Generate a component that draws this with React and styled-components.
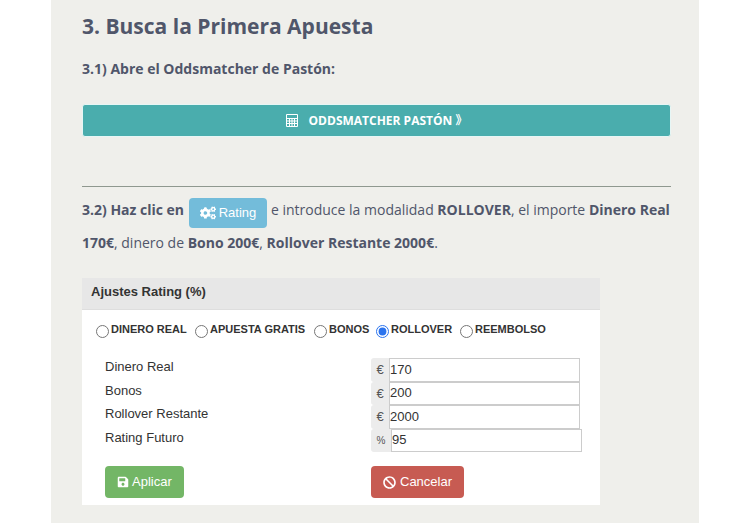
import React, { useState } from 'react';
import styled, { createGlobalStyle } from 'styled-components';
import { FaBan, FaCogs, FaSave } from 'react-icons/fa';

const GlobalStyle = createGlobalStyle`
  body {
    margin: 0;
    background: #fff;
  }

  * {
    box-sizing: border-box;
  }
`;

const Article = styled.main`
  margin: 0 51px;
  padding: 8px 28px 18px 31px;
  background: #efefeb;
  color: #50566a;
  font-family: 'Open Sans', 'Noto Sans CJK JP', sans-serif;
  font-size: 14px;
  line-height: 30px;
`;

const Title = styled.h2`
  margin: 0 0 10px;
  font-size: 21px;
  font-weight: 700;
  line-height: 36px;
`;

const Step = styled.p`
  margin: 0;
`;

const OddsmatcherLink = styled.a`
  display: flex;
  align-items: center;
  justify-content: center;
  gap: 11px;
  height: 33px;
  margin: 20px 0 49px;
  border: 1px solid #e6f6f5;
  border-radius: 3px;
  background: #4aadad;
  color: #fff;
  font-size: 12px;
  font-weight: 700;
  text-decoration: none;
`;

const Divider = styled.hr`
  margin: 0 0 8px;
  border: 0;
  border-top: 1px solid #8f988f;
`;

const Button = styled.button`
  display: inline-flex;
  align-items: center;
  justify-content: center;
  justify-self: start;
  gap: ${(props) => props.$gap || 3}px;
  height: 32px;
  padding: 0 12px;
  border: 0;
  border-radius: 4px;
  background: ${(props) => props.$color};
  color: #fff;
  font-family: 'Liberation Sans', Arial, sans-serif;
  font-size: 13px;
  line-height: 16px;
`;

const RatingButton = styled(Button)`
  height: 30px;
  margin-left: 1px;
  padding: 0 11px;
  vertical-align: -6px;
`;

const Panel = styled.form`
  max-width: 518px;
  margin-top: 20px;
  padding-bottom: 7px;
  background: #fff;
  color: #333;
  font-family: 'Liberation Sans', Arial, sans-serif;
  font-size: 13px;
  line-height: 18px;
`;

const PanelHeader = styled.h3`
  height: 32px;
  margin: 0;
  padding: 5px 9px;
  border-bottom: 1px solid #dedede;
  background: #e7e7e7;
  font-size: 13px;
  line-height: 18px;
`;

const Modes = styled.div`
  display: grid;
  grid-template-columns: 99px 119px 62px 84px auto;
  padding: 10px 14px 0;
`;

const Mode = styled.label`
  display: flex;
  align-items: flex-start;
  gap: 2px;
  font-size: 11px;
  font-weight: 700;
  white-space: nowrap;

  input {
    width: 13px;
    height: 13px;
    margin: 5px 0 0;
    accent-color: #2a73ee;
  }
`;

const Fields = styled.div`
  display: grid;
  grid-auto-rows: 1fr;
  height: 94px;
  margin: 20px 0 14px;
`;

const Field = styled.div`
  display: grid;
  grid-template-columns: 266px 1fr;
  padding: 0 18px 0 23px;
`;

const Amount = styled.div`
  display: flex;
`;

const Unit = styled.span`
  width: ${(props) => (props.$small ? 20 : 18)}px;
  border-radius: 3px 0 0 3px;
  background: #ececec;
  color: #555;
  font-size: ${(props) => (props.$small ? 10 : 13)}px;
  line-height: 23px;
  text-align: center;
`;

const AmountInput = styled.input`
  width: 191px;
  min-width: 0;
  padding: 0;
  border: 1px solid #ccc;
  border-radius: 0;
  background: #fff;
  color: #333;
  font: inherit;
`;

const CalculatorIcon = () => (
  <svg width="12" height="13" viewBox="0 0 12 13" fill="none" stroke="#fff" aria-hidden="true">
    <path d="M.5.5h11v12H.5zM1 4.5h10M1 7h10M1 9.5h10M3.5 5v7M6 5v7M8.5 5v7" />
  </svg>
);

const modes = ['DINERO REAL', 'APUESTA GRATIS', 'BONOS', 'ROLLOVER', 'REEMBOLSO'];

const fields = [
  { id: 'dinero', label: 'Dinero Real', unit: '€', value: '170' },
  { id: 'bonos', label: 'Bonos', unit: '€', value: '200' },
  { id: 'rollover', label: 'Rollover Restante', unit: '€', value: '2000' },
  { id: 'rating', label: 'Rating Futuro', unit: '%', value: '95' },
];

const RatingSettings = () => {
  const [mode, setMode] = useState('ROLLOVER');

  return (
    <Panel onSubmit={(event) => event.preventDefault()}>
      <PanelHeader>Ajustes Rating (%)</PanelHeader>
      <Modes>
        {modes.map((name) => (
          <Mode key={name}>
            <input
              type="radio"
              name="mode"
              checked={mode === name}
              onChange={() => setMode(name)}
            />
            {name}
          </Mode>
        ))}
      </Modes>
      <Fields>
        {fields.map(({ id, label, unit, value }) => (
          <Field key={id}>
            <label htmlFor={id}>{label}</label>
            <Amount>
              <Unit $small={unit === '%'}>{unit}</Unit>
              <AmountInput id={id} defaultValue={value} />
            </Amount>
          </Field>
        ))}
      </Fields>
      <Field>
        <Button type="submit" $color="#73b666">
          <FaSave size={12} />
          Aplicar
        </Button>
        <Button type="button" $color="#c75b52" $gap={4}>
          <FaBan size={13} />
          Cancelar
        </Button>
      </Field>
    </Panel>
  );
};

export default function App() {
  return (
    <>
      <GlobalStyle />
      <Article>
        <Title>3. Busca la Primera Apuesta</Title>
        <Step>
          <strong>3.1) Abre el Oddsmatcher de Pastón:</strong>
        </Step>
        <OddsmatcherLink href="#oddsmatcher">
          <CalculatorIcon />
          ODDSMATCHER PASTÓN 》
        </OddsmatcherLink>
        <Divider />
        <Step>
          <strong>3.2) Haz clic en</strong>{' '}
          <RatingButton type="button" $color="#73bcda">
            <FaCogs size={16} />
            Rating
          </RatingButton>{' '}
          e introduce la modalidad <strong>ROLLOVER</strong>, el importe{' '}
          <strong>Dinero Real 170€</strong>, dinero de <strong>Bono 200€</strong>,{' '}
          <strong>Rollover Restante 2000€</strong>.
        </Step>
        <RatingSettings />
      </Article>
    </>
  );
}
